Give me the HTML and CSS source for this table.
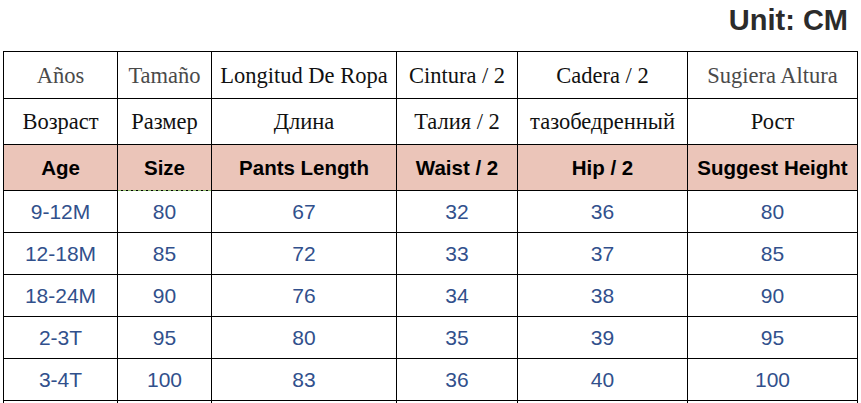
FILE: index.html
```html
<!DOCTYPE html>
<html>
<head>
<meta charset="utf-8">
<link rel="stylesheet" href="styles.css">
</head>
<body>
<div class="unit">Unit: CM</div>
<table class="chart">
  <colgroup>
    <col class="c1"><col class="c2"><col class="c3"><col class="c4"><col class="c5"><col class="c6">
  </colgroup>
  <tr class="es">
    <td class="muted">Años</td>
    <td class="muted">Tamaño</td>
    <td>Longitud De Ropa</td>
    <td>Cintura / 2</td>
    <td>Cadera / 2</td>
    <td class="muted">Sugiera Altura</td>
  </tr>
  <tr class="ru">
    <td>Возраст</td>
    <td>Размер</td>
    <td>Длина</td>
    <td>Талия / 2</td>
    <td>тазобедренный</td>
    <td>Рост</td>
  </tr>
  <tr class="en">
    <th>Age</th>
    <th class="size">Size</th>
    <th>Pants Length</th>
    <th>Waist / 2</th>
    <th>Hip / 2</th>
    <th>Suggest Height</th>
  </tr>
  <tr class="data"><td>9-12M</td><td>80</td><td>67</td><td>32</td><td>36</td><td>80</td></tr>
  <tr class="data"><td>12-18M</td><td>85</td><td>72</td><td>33</td><td>37</td><td>85</td></tr>
  <tr class="data"><td>18-24M</td><td>90</td><td>76</td><td>34</td><td>38</td><td>90</td></tr>
  <tr class="data"><td>2-3T</td><td>95</td><td>80</td><td>35</td><td>39</td><td>95</td></tr>
  <tr class="data"><td>3-4T</td><td>100</td><td>83</td><td>36</td><td>40</td><td>100</td></tr>
  <tr class="data"><td></td><td></td><td></td><td></td><td></td><td></td></tr>
</table>
</body>
</html>
```

FILE: styles.css
```css
html, body {
  margin: 0;
  padding: 0;
  background: #ffffff;
}
body {
  width: 861px;
  height: 403px;
  overflow: hidden;
}
.unit {
  box-sizing: border-box;
  height: 51px;
  padding: 6px 13px 0 0;
  text-align: right;
  font-family: "Liberation Sans", Arial, sans-serif;
  font-weight: bold;
  font-size: 29px;
  line-height: 29px;
  color: #2b2b2b;
}
.chart {
  margin-left: 3px;
  border-collapse: collapse;
  table-layout: fixed;
  width: 854px;
}
.c1 { width: 114px; }
.c2 { width: 94px; }
.c3 { width: 185px; }
.c4 { width: 121px; }
.c5 { width: 170px; }
.c6 { width: 170px; }
.chart td, .chart th {
  border: 1px solid #000;
  padding: 0;
  text-align: center;
  vertical-align: middle;
  white-space: nowrap;
  overflow: visible;
}
.es td, .ru td {
  height: 45px;
  font-family: "Liberation Serif", "Times New Roman", serif;
  font-size: 22.5px;
  color: #111;
}
.es td {
  padding-top: 1px;
}
.es td.muted {
  color: #4a4a4a;
}
.en th {
  height: 44px;
  background: #ebc5b9;
  font-family: "Liberation Sans", Arial, sans-serif;
  font-weight: bold;
  font-size: 20.5px;
  color: #000;
  padding-top: 1px;
}
.en th.size {
  position: relative;
}
.en th.size::after {
  content: "";
  position: absolute;
  left: 0;
  right: 0;
  bottom: -1px;
  border-bottom: 1px dashed #8fbf6c;
}
.data td {
  height: 40px;
  padding-top: 1px;
  font-family: "Liberation Sans", Arial, sans-serif;
  font-size: 21px;
  color: #31508c;
}
```
